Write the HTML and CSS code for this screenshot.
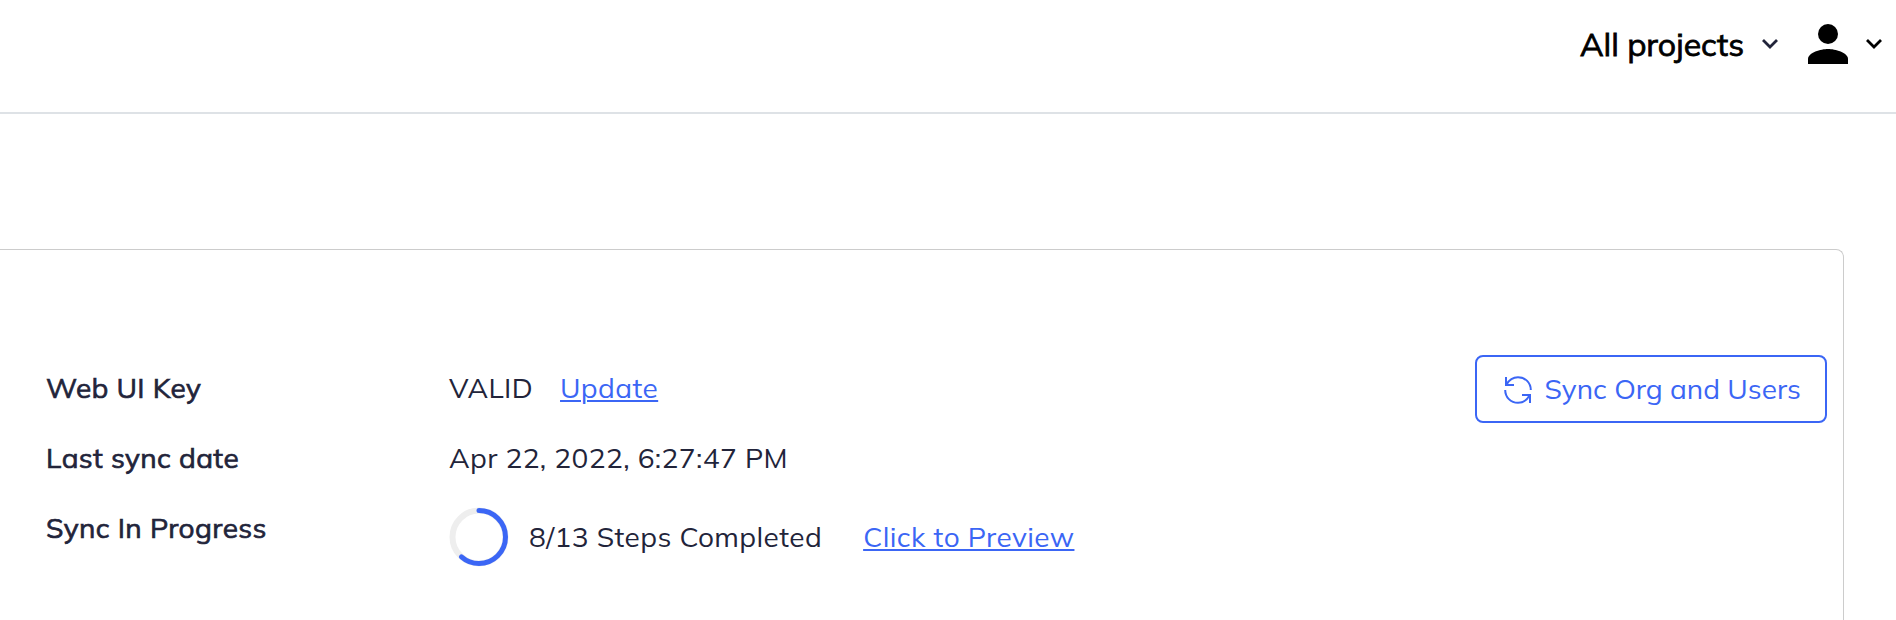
FILE: index.html
```html
<!DOCTYPE html>
<html lang="en">
<head>
<meta charset="utf-8">
<title>Organization sync</title>
<link rel="stylesheet" href="styles.css">
</head>
<body>
<header class="topbar">
  <button class="projects"><span class="projects-text">All projects</span>
    <svg class="chevron" width="18" height="12" viewBox="0 0 18 12"><path d="M2 2l7 7 7-7"/></svg>
  </button>
  <button class="account" aria-label="Account">
    <svg width="40" height="40" viewBox="0 0 40 40"><circle cx="20" cy="10" r="10"/><path d="M0 40v-5C0 28.500 13 25 20 25s20 3.500 20 10v5z"/></svg>
    <svg class="chevron" width="18" height="12" viewBox="0 0 18 12"><path d="M2 2l7 7 7-7"/></svg>
  </button>
</header>
<main class="card">
  <dl class="details">
    <dt>Web UI Key</dt>
    <dd><span>VALID</span><a class="link update" href="#">Update</a></dd>
    <dt>Last sync date</dt>
    <dd>Apr 22, 2022, 6:27:47 PM</dd>
    <dt>Sync In Progress</dt>
    <dd class="progress">
      <svg class="ring" width="60" height="60" viewBox="0 0 60 60"><circle class="track" cx="30" cy="30" r="26.500"/><circle class="bar" cx="30" cy="30" r="26.500" pathLength="13" stroke-dasharray="8 13" transform="rotate(-90 30 30)"/></svg>
      <span class="steps">8/13 Steps Completed</span>
      <a class="link preview" href="#">Click to Preview</a>
    </dd>
  </dl>
  <button class="sync">
    <svg width="28" height="28" viewBox="0 0 28 28"><path d="M2 1v8h8M2.500 8.500C5 4 9 1.200 14 1.200c7.300 0 12.800 5.500 12.800 12.800M26 27v-8h-8M25.500 19.500C23 24 19 26.800 14 26.800 6.700 26.800 1.200 21.300 1.200 14"/></svg>
    <span>Sync Org and Users</span>
  </button>
</main>
</body>
</html>
```

FILE: styles.css
```css
* { box-sizing: border-box; }
body { margin: 0; height: 620px; overflow: hidden; background: #fff; color: #22243a; font: 28px/40px Mulish, Muli, Lato, sans-serif; }
button { display: flex; align-items: center; padding: 0; border: 0; background: none; color: inherit; font: inherit; cursor: pointer; white-space: nowrap; }
svg { display: block; flex: none; }
.topbar { display: flex; justify-content: flex-end; align-items: flex-start; height: 114px; padding: 24px 13px 0 0; border-bottom: 2px solid #dee2e6; }
.projects-text { color: #000; font-size: 32px; -webkit-text-stroke: 0.8px; }
.chevron { fill: none; stroke: currentColor; stroke-width: 2.800; }
.projects { height: 40px; gap: 17px; margin-right: 29px; }
.projects .chevron { margin-top: -1px; }
.account { color: #000; gap: 17px; }
.account > svg:first-child { fill: currentColor; }
.account .chevron { margin-top: -1px; }
.card { display: flex; justify-content: space-between; align-items: flex-start; width: 1864px; height: 371px; margin: 135px 0 0 -20px; padding: 105px 16px 0 65px; border: 1px solid #ccc; border-bottom: 0; border-radius: 8px 8px 0 0; }
.details { display: grid; grid-template-columns: 403px auto; row-gap: 30px; margin: 13px 0 0; letter-spacing: 0.4px; }
.details dt { -webkit-text-stroke: 0.7px; }
.details dd { display: flex; margin: 0; white-space: nowrap; }
.link { color: #3b66f5; text-decoration: underline; text-decoration-thickness: 2px; text-underline-offset: 2px; }
.update { margin-left: 27px; }
.progress { align-items: center; height: 60px; }
.details .progress { margin-top: -1px; }
.steps { margin-left: 20px; }
.preview { margin-left: 41px; }
.ring circle { fill: none; stroke-width: 6; }
.ring .track { stroke: #eee; }
.ring .bar { stroke: #3b66f5; stroke-width: 5; stroke-linecap: round; }
.sync { width: 352px; height: 68px; padding-left: 27px; gap: 12.500px; border: 2px solid #3b66f5; border-radius: 8px; color: #3b66f5; }
.sync svg { margin-top: 2px; fill: none; stroke: currentColor; stroke-width: 2; }
```
